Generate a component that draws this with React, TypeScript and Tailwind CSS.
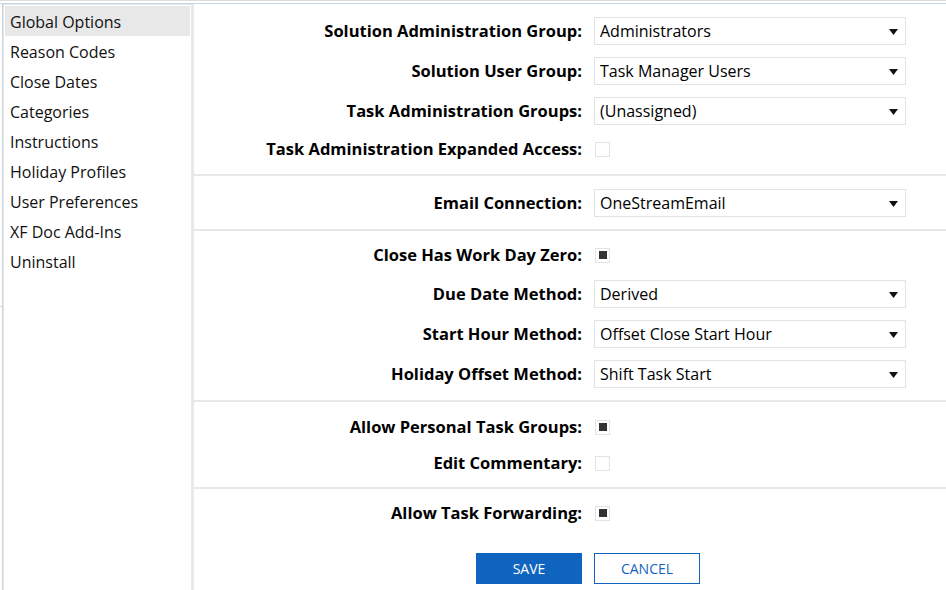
import React from 'react'

const menu = [
  'Global Options',
  'Reason Codes',
  'Close Dates',
  'Categories',
  'Instructions',
  'Holiday Profiles',
  'User Preferences',
  'XF Doc Add-Ins',
  'Uninstall'
]

const font = { fontFamily: '"Segoe UI", "Open Sans", "Noto Sans", sans-serif' }

const Label = ({ text }: { text: string }) => (
  <div className="text-right text-[16.5px] font-bold text-black leading-none whitespace-nowrap">{text}</div>
)

const Select = ({ value }: { value: string }) => (
  <div className="h-[28px] w-[312px] border border-[#e3e3e3] bg-white flex items-center justify-between pl-[5px] pr-[7px]">
    <span className="text-[16px] text-black leading-none">{value}</span>
    <svg width="9" height="6" viewBox="0 0 9 6" className="mt-[1px]">
      <path d="M0 0 H9 L4.5 6 Z" fill="#111" />
    </svg>
  </div>
)

const Check = ({ checked }: { checked?: boolean }) => (
  <div className="ml-[1px] h-[15px] w-[15px] border border-[#e3e3e3] bg-white flex items-center justify-center">
    {checked && <div className="h-[8px] w-[8px] bg-[#333]" />}
  </div>
)

const SelectRow = ({ label, value }: { label: string; value: string }) => (
  <div className="grid grid-cols-[388px_312px] gap-x-[12px] items-center h-[28px]">
    <Label text={label} />
    <Select value={value} />
  </div>
)

const CheckRow = ({ label, checked }: { label: string; checked?: boolean }) => (
  <div className="grid grid-cols-[388px_312px] gap-x-[12px] items-center h-[24px]">
    <Label text={label} />
    <Check checked={checked} />
  </div>
)

const Sep = () => <div className="h-[2px] bg-[#e8e8e8]" />

export default function App() {
  return (
    <div className="w-[946px] h-[590px] overflow-hidden bg-white flex flex-col" style={font}>
      <div className="h-[1px] bg-[#dcdcdc]" />
      <div className="h-[2px]" />
      <div className="h-[1px] bg-[#c7d4e1]" />
      <div className="flex flex-1 min-h-0">
        {/* left edge */}
        <div className="w-[2px] flex flex-col">
          <div className="mt-[302px] h-[1px] bg-[#d6d6d6]" />
        </div>
        <div className="w-[1px] bg-[#c7d4e1]" />
        {/* sidebar */}
        <div className="w-[188px] border-l border-t border-[#e6e6e6] bg-white px-[1px] pt-[1px]">
          {menu.map((m, i) => (
            <div
              key={m}
              className={`h-[30px] flex items-center pl-[5px] pt-[2px] text-[16px] text-[#111] ${i === 0 ? 'bg-[#e8e8e8]' : ''}`}
            >
              {m}
            </div>
          ))}
        </div>
        <div className="w-[3px] bg-[#e8e8e8]" />
        {/* content */}
        <div className="flex-1 flex flex-col">
          <div className="pt-[13px] pb-[13px] flex flex-col gap-y-[12px]">
            <SelectRow label="Solution Administration Group:" value="Administrators" />
            <SelectRow label="Solution User Group:" value="Task Manager Users" />
            <SelectRow label="Task Administration Groups:" value="(Unassigned)" />
            <CheckRow label="Task Administration Expanded Access:" />
          </div>
          <Sep />
          <div className="pt-[13px] pb-[12px]">
            <SelectRow label="Email Connection:" value="OneStreamEmail" />
          </div>
          <Sep />
          <div className="pt-[12px] pb-[12px] flex flex-col gap-y-[12px]">
            <CheckRow label="Close Has Work Day Zero:" checked />
            <div className="mt-[1px]">
              <SelectRow label="Due Date Method:" value="Derived" />
            </div>
            <SelectRow label="Start Hour Method:" value="Offset Close Start Hour" />
            <SelectRow label="Holiday Offset Method:" value="Shift Task Start" />
          </div>
          <Sep />
          <div className="pt-[13px] pb-[12px] flex flex-col gap-y-[12px]">
            <CheckRow label="Allow Personal Task Groups:" checked />
            <CheckRow label="Edit Commentary:" />
          </div>
          <Sep />
          <div className="pt-[12px]">
            <CheckRow label="Allow Task Forwarding:" checked />
          </div>
          <div className="mt-[28px] grid grid-cols-[388px_312px] gap-x-[12px]">
            <div className="flex justify-end">
              <button className="h-[31px] w-[106px] bg-[#0f64c0] text-white text-[14px] leading-none">SAVE</button>
            </div>
            <div>
              <button className="h-[31px] w-[106px] border border-[#0f64c0] bg-white text-[#1565c0] text-[14px] leading-none">CANCEL</button>
            </div>
          </div>
        </div>
      </div>
    </div>
  )
}
